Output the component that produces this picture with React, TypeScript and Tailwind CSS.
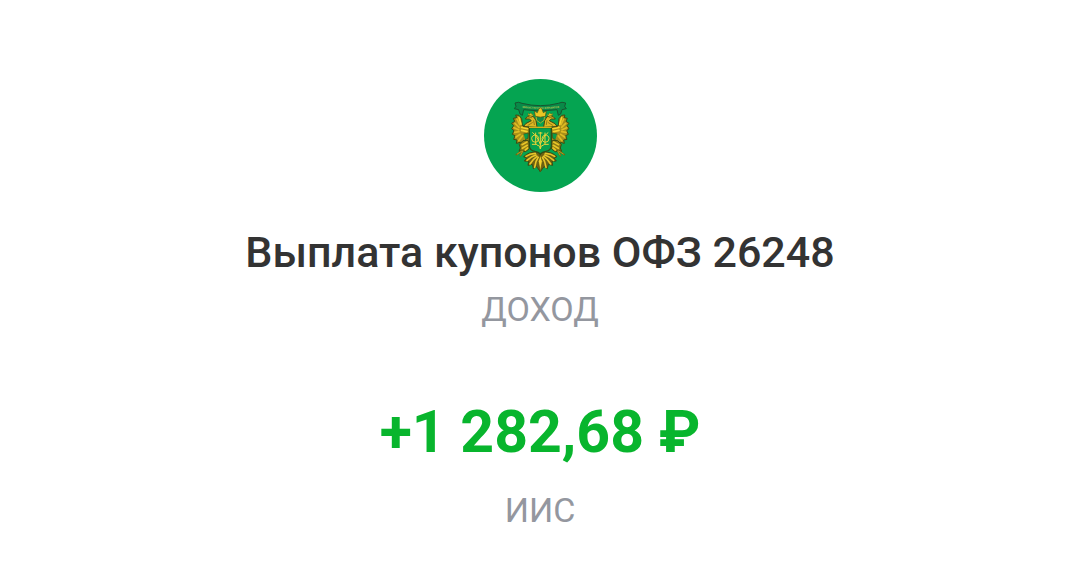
import { useId } from "react";

// Left half of the eagle, the right half is the same group mirrored around x = 181
function EagleHalf() {
  return (
    <g strokeLinejoin="round" strokeLinecap="round">
      {/* Wing */}
      <path
        d="M151 158 L127 152 L125 131 L117 121 L107 120 L110 128 L100 130 L104 139 L95 145 L101 152 L95 161 L102 167 L97 178 L105 182 L101 193 L111 195 L109 205 L121 202 L130 208 L149 200 L151 181 Z"
        fill="#a88f19"
        stroke="#3d4a12"
        strokeWidth={3}
      />
      <path
        d="M111 132 L119 149 M105 145 L117 157 M102 158 L116 164 M104 172 L117 170 M108 186 L120 178 M116 197 L127 183"
        fill="none"
        stroke="#dfbc24"
        strokeWidth={5}
      />
      <path
        d="M117 128 L123 148 M125 157 L143 161 M125 166 L141 170"
        fill="none"
        stroke="#f6d52e"
        strokeWidth={5}
      />
      <path d="M131 177 L145 174 L144 190 L136 194" fill="#079c4b" stroke="#3d4a12" strokeWidth={2} />
      {/* Neck and head */}
      <path
        d="M171 156 L168 137 Q164 123 151 121 Q142 123 136 132 L148 132 L154 137 L137 146 L131 154 Z"
        fill="#dcb722"
        stroke="#45440f"
        strokeWidth={3}
      />
      <path d="M144 126 L155 128 M161 137 L163 149 M144 151 L157 143" fill="none" stroke="#6c600f" strokeWidth={2} />
      <path d="M145 121 L144 115 L149 118 L153 113 L156 119 L161 117 L158 123 Z" fill="#e9c726" stroke="#4b4b10" strokeWidth={1} />
      {/* Leg and claws */}
      <path
        d="M143 196 L129 197 L118 208 L121 219 L117 229 L125 227 L136 230 L147 222 L149 206 Z"
        fill="#8c7813"
        stroke="#3d4a12"
        strokeWidth={3}
      />
      <path
        d="M141 201 L126 209 M142 211 L127 220 M143 219 L136 225"
        fill="none"
        stroke="#e8c628"
        strokeWidth={5}
      />
      <path d="M126 228 L109 239 M128 229 L121 242" fill="none" stroke="#75680f" strokeWidth={5} />
      <path d="M126 228 L112 237 M128 229 L122 240" fill="none" stroke="#d2b125" strokeWidth={2} />
      {/* Tail feathers */}
      <path
        d="M168 231 Q147 230 131 245 L140 249 L133 258 L146 259 L144 271 L157 268 L160 281 L170 275 L181 290 V236 Z"
        fill="#6d6112"
        stroke="#3d4b12"
        strokeWidth={3}
      />
      <path
        d="M166 235 Q149 236 138 244 M168 240 Q153 244 141 256 M171 244 Q158 253 150 267 M175 247 Q166 259 164 277"
        fill="none"
        stroke="#e9c62a"
        strokeWidth={5}
      />
    </g>
  );
}

function Emblem() {
  const ribbonId = useId();

  return (
    <svg
      className="size-[113px]"
      viewBox="12 12 339 339"
      role="img"
      aria-label="Министерство финансов"
    >
      <circle cx="181.5" cy="181.5" r="169.5" fill="#05a451" />

      {/* Ribbon */}
      <path
        d="M105 84 Q116 79 126 85 Q181 99 235 85 Q246 79 257 84 L254 94 L259 101 L246 104 L242 117 L235 121 L231 104 Q181 112 131 104 L127 121 L120 117 L116 104 L103 101 L108 94 Z"
        fill="#098a48"
        stroke="#17552f"
        strokeWidth={3}
        strokeLinejoin="round"
      />
      <path id={ribbonId} d="M112 96 Q181 108 252 96" fill="none" />
      <text fill="#a9c24f" fontSize="8" fontWeight="700" textAnchor="middle" className="font-['Roboto',sans-serif]">
        <textPath href={`#${ribbonId}`} startOffset="50%">
          МИНИСТЕРСТВО ФИНАНСОВ
        </textPath>
      </text>

      <EagleHalf />
      <g transform="translate(362 0) scale(-1 1)">
        <EagleHalf />
      </g>
      <path d="M181 240 L187 259 L181 290 L175 259 Z" fill="#f4d22d" stroke="#575510" strokeWidth={2} />

      {/* Crown */}
      <path d="M168 122 L170 136 L181 144 L192 136 L194 122 Z" fill="#148848" stroke="#e4c129" strokeWidth={2} />
      <path
        d="M166 124 L163 108 L172 113 L176 103 L181 98 L186 103 L190 113 L199 108 L196 124 Q181 129 166 124 Z"
        fill="#e9c624"
        stroke="#4c4b10"
        strokeWidth={2}
      />

      {/* Shield */}
      <path
        d="M148 158 H214 V213 Q213 227 197 229 Q187 230 181 237 Q175 230 165 229 Q149 227 148 213 Z"
        fill="#06a04d"
        stroke="#334e14"
        strokeWidth={4}
      />
      <path d="M147 157 H215" stroke="#d2ae1b" strokeWidth={4} />

      {/* Monogram with a trident between two loops */}
      <g fill="none" stroke="#ead338" strokeWidth={3} strokeLinecap="round">
        <path d="M167 174 V207 M195 174 V207 M157 208 H170 M192 208 H205" />
        <path d="M158 173 Q170 181 181 208 Q192 181 204 173" />
        <path d="M167 180 Q155 180 155 191 Q155 202 167 202 Q176 200 176 191 Q176 182 167 180" />
        <path d="M195 180 Q207 180 207 191 Q207 202 195 202 Q186 200 186 191 Q186 182 195 180" />
        <path d="M181 172 V220 M176 174 H186 M172 210 Q181 211 181 222 Q181 211 190 210" />
      </g>
    </svg>
  );
}

export default function App() {
  return (
    <main className="flex min-h-screen flex-col items-center bg-white px-4 pt-[79px] pb-8 text-center font-['Roboto',sans-serif]">
      <Emblem />
      <h1 className="mt-8 text-[43px] leading-14 font-medium text-[#333333]">
        Выплата купонов ОФЗ 26248
      </h1>
      <p className="text-[34px] leading-[58px] text-[#94979f]">ДОХОД</p>
      <p className="mt-[62px] text-[59px] leading-16 font-bold text-[#08b52d]">+1 282,68 ₽</p>
      <p className="mt-[17px] text-[34px] leading-[58px] text-[#94979f]">ИИС</p>
    </main>
  );
}
